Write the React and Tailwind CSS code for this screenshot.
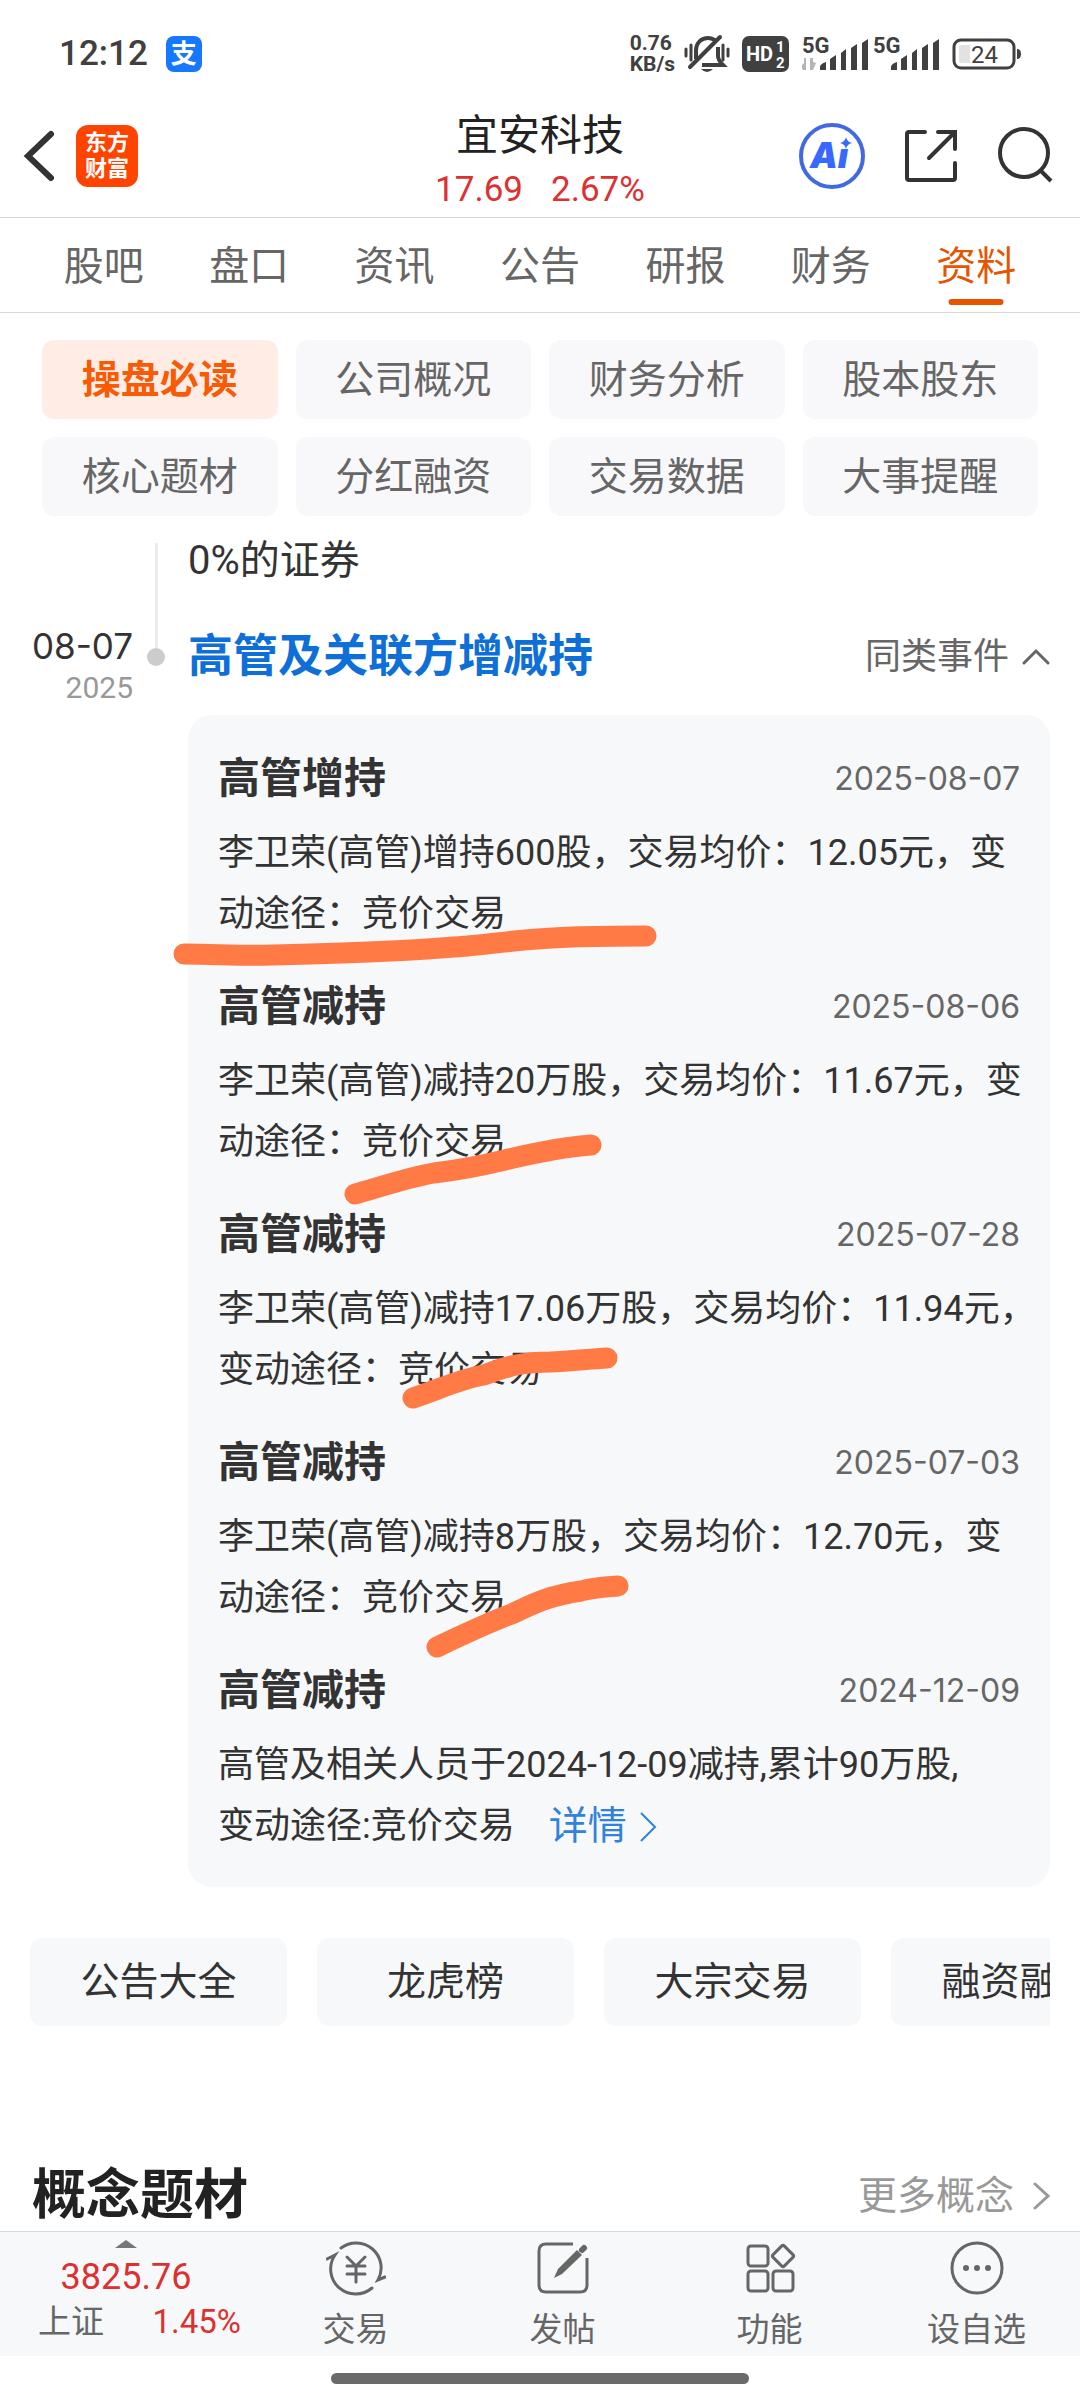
import React, { useState } from "react";
import clsx from "clsx";

const TABS = ["股吧", "盘口", "资讯", "公告", "研报", "财务", "资料"];

const SECTIONS = [
  "操盘必读",
  "公司概况",
  "财务分析",
  "股本股东",
  "核心题材",
  "分红融资",
  "交易数据",
  "大事提醒",
];

const EVENTS = [
  {
    title: "高管增持",
    date: "2025-08-07",
    lines: ["李卫荣(高管)增持600股，交易均价：12.05元，变", "动途径：竞价交易"],
  },
  {
    title: "高管减持",
    date: "2025-08-06",
    lines: ["李卫荣(高管)减持20万股，交易均价：11.67元，变", "动途径：竞价交易"],
  },
  {
    title: "高管减持",
    date: "2025-07-28",
    lines: ["李卫荣(高管)减持17.06万股，交易均价：11.94元，", "变动途径：竞价交易"],
  },
  {
    title: "高管减持",
    date: "2025-07-03",
    lines: ["李卫荣(高管)减持8万股，交易均价：12.70元，变", "动途径：竞价交易"],
  },
  {
    title: "高管减持",
    date: "2024-12-09",
    lines: ["高管及相关人员于2024-12-09减持,累计90万股,", "变动途径:竞价交易"],
    detail: true,
  },
];

const SHORTCUTS = ["公告大全", "龙虎榜", "大宗交易", "融资融券"];

function Signal({ arrows }) {
  return (
    <svg width="66" height="48" viewBox="0 -6 66 48" fill="#404040" aria-hidden="true">
      <text x="0" y="17" fontSize="22" fontWeight="700" fontFamily="Roboto, sans-serif">
        5G
      </text>
      {arrows && <path d="M4 22v12h-3l-2-4 3-3v-5zM8 22h3v4l3 1-3 7H8z" fill="#b5b5b5" />}
      <path d="M18 34v-3q0-3 6-5v8zM28 34V23l6-4v15zM39 34V17l5-4v21zM49 34V12l6-4v26zM60 34V7l6-4v31z" />
    </svg>
  );
}

function StatusBar() {
  return (
    <div className="flex h-[95px] items-center justify-between pt-[13px] pr-[59px] pl-[59px] text-[#404040]">
      <div className="flex items-center gap-[18px]">
        <span className="text-[35px] leading-[40px] font-medium">12:12</span>
        <span className="flex size-9 items-center justify-center rounded-lg bg-[#1677ff] text-[26px] leading-[36px] font-bold text-white">
          支
        </span>
      </div>
      <div className="flex items-center">
        <div className="mr-[9px] text-[21px] leading-[21px] font-bold">
          <div>0.76</div>
          <div>KB/s</div>
        </div>
        <svg width="46" height="40" viewBox="0 0 46 40" className="mr-[12px]" fill="none" stroke="#404040" strokeWidth="3" aria-hidden="true">
          <path d="M2 15v7M7 11v15M39 11v15M44 15v7" strokeLinecap="round" />
          <path d="M12 25V17c0-9 6-13 12-13 3 0 5 1 7 2M34 13v9c0 3 2 6 5 9H18" strokeWidth="4" />
          <path d="M6 33 36 3" strokeWidth="4" strokeLinecap="round" />
          <path d="M17 35h12q-6 6-12 0z" fill="#404040" stroke="none" />
        </svg>
        <svg width="47" height="36" viewBox="0 0 47 36" className="mr-[13px]" fill="#fff" fontFamily="Roboto, sans-serif" aria-hidden="true">
          <rect width="47" height="36" rx="7" fill="#404040" />
          <text x="4" y="25" fontSize="20" fontWeight="700">HD</text>
          <text x="34" y="16" fontSize="15" fontWeight="700">1</text>
          <text x="34" y="32" fontSize="15" fontWeight="700">2</text>
        </svg>
        <div className="mr-[5px]">
          <Signal arrows />
        </div>
        <div className="mr-[13px]">
          <Signal />
        </div>
        <svg width="69" height="32" viewBox="0 0 69 32" aria-hidden="true">
          <rect x="2" y="2" width="60" height="28" rx="7" fill="#fff" stroke="#404040" strokeWidth="3" />
          <path d="M10 7h8v18h-8q-3 0-3-3V10q0-3 3-3z" fill="#e2e2e2" />
          <path d="M65 11q4 0 4 5t-4 5z" fill="#404040" />
          <text x="19" y="25" fontSize="24" fill="#404040" fontFamily="Roboto, sans-serif">
            24
          </text>
        </svg>
      </div>
    </div>
  );
}

function Header() {
  return (
    <header className="grid h-[123px] grid-cols-[1fr_auto_1fr] items-center border-b border-[#d8d8d8]">
      <div className="flex items-center gap-[20px] pl-[22px]">
        <button type="button" aria-label="返回">
          <svg width="34" height="56" viewBox="0 0 34 56" fill="none" stroke="#333" strokeWidth="6" strokeLinecap="round">
            <path d="M29 6 6 28l23 22" />
          </svg>
        </button>
        <span className="flex size-[62px] flex-col items-center justify-center rounded-xl bg-[#ff4400] text-[22px] leading-[26px] font-bold text-white">
          <span>东方</span>
          <span>财富</span>
        </span>
      </div>
      <div className="self-end text-center">
        <h1 className="text-[42px] leading-[54px] text-[#222]">宜安科技</h1>
        <p className="flex justify-center gap-[28px] text-[35px] leading-[54px] text-[#dd3030]">
          <span>17.69</span>
          <span>2.67%</span>
        </p>
      </div>
      <div className="flex items-center justify-end gap-[38px] pr-[25px]">
        <button type="button" aria-label="Ai">
          <svg width="66" height="66" viewBox="0 0 66 66">
            <circle cx="33" cy="33" r="31" fill="none" stroke="#4069e5" strokeWidth="4" />
            <text x="11" y="45" fontSize="35" fontWeight="900" fontStyle="italic" fill="#3868ff" fontFamily="Inter, sans-serif">
              Aı
            </text>
            <path d="M47 14q1 5 6 6-5 1-6 6-1-5-6-6 5-1 6-6z" fill="#3868ff" />
          </svg>
        </button>
        <button type="button" aria-label="分享">
          <svg width="56" height="56" viewBox="0 0 56 56" fill="none" stroke="#333" strokeWidth="4" strokeLinecap="round">
            <path d="M22 4H6q-2 0-2 2v44q0 2 2 2h44q2 0 2-2V35" />
            <path d="M35 4h17v17M51 5 26 30" />
          </svg>
        </button>
        <button type="button" aria-label="搜索">
          <svg width="58" height="58" viewBox="0 0 58 58" fill="none" stroke="#333" strokeWidth="4">
            <circle cx="27" cy="26" r="24" />
            <path d="M43 43 54 54" />
          </svg>
        </button>
      </div>
    </header>
  );
}

function EventCard({ event }) {
  return (
    <article className="flex flex-col gap-[14px]">
      <div className="flex items-center justify-between">
        <h3 className="text-[42px] leading-[60px] font-bold text-[#333]">{event.title}</h3>
        <time className="font-['Inter',sans-serif] text-[32px] leading-[60px] text-[#666]">{event.date}</time>
      </div>
      <div className="text-[36px] leading-[61px] whitespace-nowrap text-[#333]">
        <p>{event.lines[0]}</p>
        <div className="flex gap-[34px]">
          <p>{event.lines[1]}</p>
          {event.detail && (
            <a href="#detail" className="flex items-center gap-[12px] text-[39px] text-[#3082dd]">
              详情
              <svg width="18" height="32" viewBox="0 0 18 32" fill="none" stroke="currentColor" strokeWidth="2">
                <path d="M2 2 16 16 2 30" />
              </svg>
            </a>
          )}
        </div>
      </div>
    </article>
  );
}

function Timeline() {
  const [open, setOpen] = useState(true);

  return (
    <section className="relative flex pr-[30px]">
      <div className="w-[133px] shrink-0 pt-[82px] text-right">
        <div className="font-['Inter',sans-serif] text-[35px] leading-[42px] text-[#333]">08-07</div>
        <div className="text-[30px] leading-[42px] text-[#999]">2025</div>
      </div>
      <div className="mr-[23px] ml-[14px] flex w-[18px] shrink-0 flex-col items-center">
        <div className="h-[105px] w-[3px] bg-[#ebebeb]" />
        <div className="size-[18px] rounded-full bg-[#ccc]" />
      </div>
      <div className="min-w-0 flex-1">
        <p className="text-[40px] leading-[36px] text-[#333]">0%的证券</p>
        <div className="mt-[48px] flex items-center justify-between">
          <h2 className="text-[45px] leading-[60px] font-bold text-[#0f6fd8]">高管及关联方增减持</h2>
          <button
            type="button"
            onClick={() => setOpen(!open)}
            className="flex items-center gap-[13px] text-[36px] leading-[60px] text-[#666]"
          >
            同类事件
            <svg width="28" height="20" viewBox="0 0 28 20" fill="none" stroke="currentColor" strokeWidth="3" strokeLinecap="round">
              <path d="M2 16 14 4l12 12" />
            </svg>
          </button>
        </div>
        {open && (
          <div className="mt-[28px] flex flex-col gap-[32px] rounded-3xl bg-[#f7f8fa] px-[30px] pt-[34px] pb-[30px]">
            {EVENTS.map((event) => (
              <EventCard key={event.date} event={event} />
            ))}
          </div>
        )}
      </div>
      {/* marker strokes over the card */}
      <svg
        className="pointer-events-none absolute top-0 left-0"
        width="700"
        height="1140"
        viewBox="0 0 700 1140"
        fill="none"
        stroke="#ff7a45"
        strokeWidth="21"
        strokeLinecap="round"
        strokeLinejoin="round"
        aria-hidden="true"
      >
        <path d="M184 411C215 411 240 413 271 412C310 411 350 410 390 408C420 407 440 405 468 403C500 400 520 396 572 394C600 393 620 393 646 393" />
        <path d="M355 651C380 644 410 634 434 630C460 627 480 623 505 617C530 611 560 604 591 602" />
        <path d="M413 855C440 846 460 836 484 832C510 822 525 819 550 819C570 818 590 816 607 815" />
        <path d="M437 1104C460 1093 485 1081 509 1072C525 1066 540 1054 581 1048C595 1044 605 1044 618 1043" />
      </svg>
    </section>
  );
}

function TradeIcon() {
  return (
    <svg width="60" height="56" viewBox="0 0 60 56" fill="none" stroke="#666" strokeWidth="3" strokeLinecap="round">
      <path d="M15 8A25 25 0 0 1 52 40L59 37" />
      <path d="M1 19 9 15A25 25 0 0 0 46 48" />
      <path d="M21 17l9 9 9-9M30 26v16M21 26h18M21 34h18" />
    </svg>
  );
}

function PostIcon() {
  return (
    <svg width="56" height="56" viewBox="0 0 56 56" fill="none" stroke="#666" strokeWidth="3">
      <path d="M38 4H11q-7 0-7 7v34q0 7 7 7h34q7 0 7-7V18" />
      <path d="M19 38l4-9L42 10l5 5-20 19z" fill="#666" stroke="none" />
      <path d="M47 10l2-2" strokeWidth="6" strokeLinecap="round" />
    </svg>
  );
}

function FeatureIcon() {
  return (
    <svg width="56" height="56" viewBox="0 0 56 56" fill="none" stroke="#666" strokeWidth="3" strokeLinejoin="round">
      <rect x="6" y="6" width="20" height="20" rx="3" />
      <rect x="6" y="31" width="20" height="20" rx="3" />
      <rect x="31" y="31" width="20" height="20" rx="3" />
      <rect x="33" y="8" width="16" height="16" rx="2" transform="rotate(45 41 16)" />
    </svg>
  );
}

function MoreIcon() {
  return (
    <svg width="56" height="56" viewBox="0 0 56 56" fill="#666">
      <circle cx="28" cy="28" r="25" fill="none" stroke="#666" strokeWidth="3" />
      <circle cx="17" cy="28" r="3" />
      <circle cx="28" cy="28" r="3" />
      <circle cx="39" cy="28" r="3" />
    </svg>
  );
}

const ACTIONS = [
  { label: "交易", icon: TradeIcon },
  { label: "发帖", icon: PostIcon },
  { label: "功能", icon: FeatureIcon },
  { label: "设自选", icon: MoreIcon },
];

function BottomBar() {
  return (
    <footer>
      <div className="flex h-[125px] border-t border-[#d8d8d8] bg-[#f7f8fa]">
        <button type="button" className="flex w-[252px] shrink-0 flex-col items-center pt-2">
          <svg width="22" height="8" viewBox="0 0 22 8" fill="#777">
            <path d="M0 8 11 0l11 8z" />
          </svg>
          <span className="mt-[6px] text-[36px] leading-[46px] text-[#dd3030]">3825.76</span>
          <span className="flex w-full justify-between pr-[11px] pl-[38px] text-[33px] leading-[44px]">
            <span className="text-[#666]">上证</span>
            <span className="text-[#dd3030]">1.45%</span>
          </span>
        </button>
        {ACTIONS.map(({ label, icon: Icon }) => (
          <button key={label} type="button" className="flex flex-1 flex-col items-center gap-[14px] pt-2">
            <Icon />
            <span className="text-[33px] leading-[40px] text-[#666]">{label}</span>
          </button>
        ))}
      </div>
      <div className="flex h-[44px] items-center justify-center bg-white">
        <div className="h-[11px] w-[418px] rounded-full bg-[#6a6a6a]" />
      </div>
    </footer>
  );
}

export default function App() {
  const [tab, setTab] = useState("资料");
  const [section, setSection] = useState("操盘必读");

  return (
    <div className="overflow-x-hidden bg-white font-['Roboto','Noto_Sans_CJK_SC',sans-serif]">
      <StatusBar />
      <Header />

      <nav className="grid h-[95px] grid-cols-7 border-b border-[#d8d8d8] px-[31px]">
        {TABS.map((name) => (
          <button
            key={name}
            type="button"
            onClick={() => setTab(name)}
            className={clsx("relative pt-1 text-[40px] leading-[60px]", name === tab ? "text-[#e65400]" : "text-[#666]")}
          >
            {name}
            {name === tab && (
              <span className="absolute bottom-[7px] left-1/2 h-[6px] w-[55px] -translate-x-1/2 rounded-full bg-[#e65400]" />
            )}
          </button>
        ))}
      </nav>

      <div className="grid grid-cols-4 gap-[18px] px-[42px] py-[27px]">
        {SECTIONS.map((name) => (
          <button
            key={name}
            type="button"
            onClick={() => setSection(name)}
            className={clsx(
              "h-[79px] rounded-xl text-[39px] leading-[60px]",
              name === section ? "bg-[#ffede5] font-bold text-[#f95a05]" : "bg-[#f8f8fb] text-[#666]"
            )}
          >
            {name}
          </button>
        ))}
      </div>

      <Timeline />

      <div className="mx-[30px] mt-[51px] flex gap-[30px] overflow-hidden">
        {SHORTCUTS.map((name) => (
          <button
            key={name}
            type="button"
            className="h-[88px] w-[257px] shrink-0 rounded-xl bg-[#f7f8fa] text-[39px] leading-[60px] text-[#333]"
          >
            {name}
          </button>
        ))}
      </div>

      <div className="mt-[135px] flex items-center justify-between pr-[30px] pl-[32px]">
        <h2 className="text-[54px] leading-[70px] font-bold text-[#222]">概念题材</h2>
        <a href="#concepts" className="flex items-center gap-[18px] text-[39px] leading-[60px] text-[#999]">
          更多概念
          <svg width="18" height="28" viewBox="0 0 18 28" fill="none" stroke="currentColor" strokeWidth="3" strokeLinecap="round">
            <path d="M3 2 16 14 3 26" />
          </svg>
        </a>
      </div>

      <BottomBar />
    </div>
  );
}
